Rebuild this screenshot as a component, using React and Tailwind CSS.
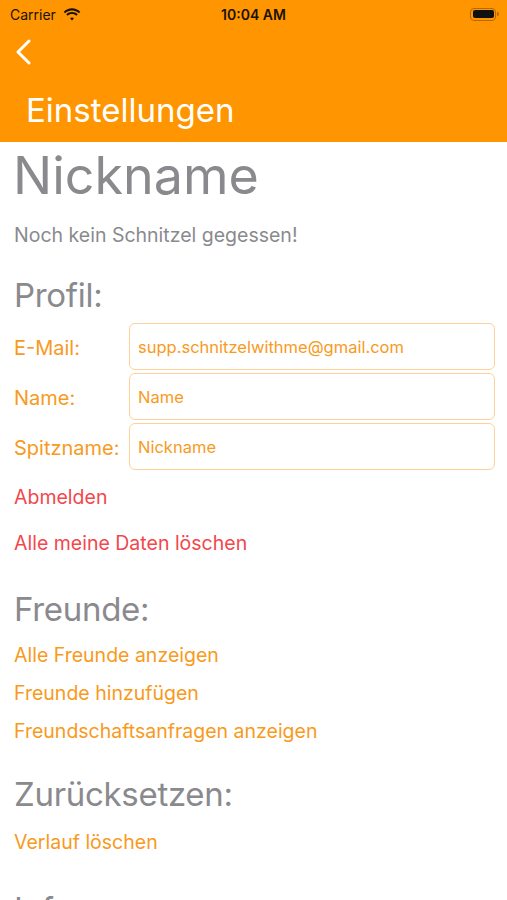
const Wifi = () => (
  <svg width="18" height="13" viewBox="0 0 17 12" className="ml-[7px]">
    <path d="M8.5 2.2c2.5 0 4.8 1 6.5 2.6l1.3-1.4C14.2 1.4 11.5.2 8.5.2S2.8 1.4.7 3.4L2 4.8c1.7-1.6 4-2.6 6.5-2.6z" fill="#1a1200" />
    <path d="M8.5 5.6c1.6 0 3 .6 4.1 1.6l1.3-1.4C12.5 4.5 10.6 3.7 8.5 3.7S4.5 4.5 3.1 5.8l1.3 1.4c1.1-1 2.5-1.6 4.1-1.6z" fill="#1a1200" />
    <path d="M8.5 8.9c.7 0 1.3.2 1.8.7L8.5 11.6 6.7 9.6c.5-.5 1.1-.7 1.8-.7z" fill="#1a1200" />
  </svg>
);

const Battery = () => (
  <div className="flex items-center">
    <div className="w-[26px] h-[13px] rounded-[4px] border border-[#b36800] p-[1.5px]">
      <div className="w-full h-full rounded-[2px] bg-[#111]" />
    </div>
    <div className="w-[2px] h-[4px] rounded-r-sm bg-[#b36800] ml-[1px]" />
  </div>
);

const Field = ({ label, value }) => (
  <div className="flex items-center h-[50px]">
    <div className="w-[115px] pt-[4px] text-[20px] text-[#f89a1c]">{label}</div>
    <div className="flex-1 h-[47px] rounded-[6px] border border-[#ffd09a] flex items-center px-2 pt-[2px] text-[16.5px] text-[#f89a1c]">
      {value}
    </div>
  </div>
);

const Link = ({ children, red }) => (
  <div className={`text-[19.5px] leading-[28px] ${red ? "text-[#f2474c]" : "text-[#f89a1c]"}`}>{children}</div>
);

const Heading = ({ children }) => (
  <h2 className="text-[33px] leading-[40px] tracking-[-0.3px] text-[#8a8a8e]">{children}</h2>
);

export default function App() {
  return (
    <div className="w-[507px] h-[900px] overflow-hidden bg-white font-['Inter',sans-serif]">
      <header className="bg-[#ff9500]">
        <div className="h-[28px] flex items-center justify-between pl-[10px] pr-[8px] relative">
          <div className="flex items-center text-[14px] text-[#1a1200]">
            Carrier
            <Wifi />
          </div>
          <div className="absolute left-0 right-0 text-center text-[14px] font-semibold text-[#1a1200]">10:04 AM</div>
          <Battery />
        </div>
        <div className="h-[48px] flex items-center pl-[16px]">
          <svg width="16" height="26" viewBox="0 0 16 26" fill="none">
            <polyline points="13,2 2,13 13,24" stroke="white" strokeWidth="3" strokeLinecap="round" strokeLinejoin="round" />
          </svg>
        </div>
        <div className="h-[66px] flex items-center pl-[26px] pt-[4px]">
          <h1 className="text-[33px] text-white">Einstellungen</h1>
        </div>
      </header>

      <main className="px-[14px]">
        <div className="text-[52px] leading-[68px] text-[#8a8a8e] -ml-[1px]">Nickname</div>
        <p className="text-[19.5px] leading-[28px] text-[#8a8a8e] mt-[11px]">Noch kein Schnitzel gegessen!</p>

        <div className="mt-[26px]">
          <Heading>Profil:</Heading>
        </div>
        <div className="mt-[6px] mr-[-2px]">
          <Field label="E-Mail:" value="supp.schnitzelwithme@gmail.com" />
          <Field label="Name:" value="Name" />
          <Field label="Spitzname:" value="Nickname" />
        </div>
        <div className="flex flex-col gap-[18px] mt-[12px]">
          <Link red>Abmelden</Link>
          <Link red>Alle meine Daten löschen</Link>
        </div>

        <div className="mt-[32px]">
          <Heading>Freunde:</Heading>
        </div>
        <div className="flex flex-col gap-[10px] mt-[12px]">
          <Link>Alle Freunde anzeigen</Link>
          <Link>Freunde hinzufügen</Link>
          <Link>Freundschaftsanfragen anzeigen</Link>
        </div>

        <div className="mt-[29px]">
          <Heading>Zurücksetzen:</Heading>
        </div>
        <div className="mt-[14px]">
          <Link>Verlauf löschen</Link>
        </div>

        <div className="mt-[33px]">
          <Heading>Info:</Heading>
        </div>
      </main>
    </div>
  );
}
